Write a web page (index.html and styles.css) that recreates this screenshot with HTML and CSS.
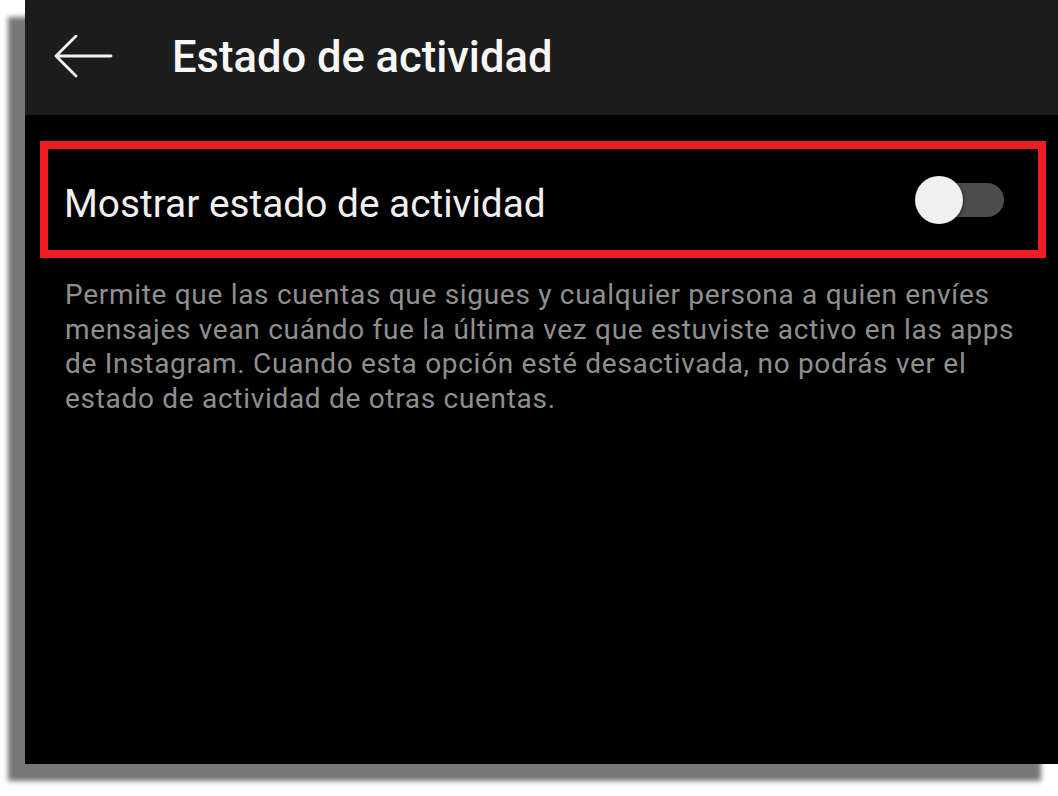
FILE: index.html
```html
<!DOCTYPE html>
<html lang="es">
<head>
<meta charset="utf-8">
<title>Estado de actividad</title>
<link rel="stylesheet" href="styles.css">
</head>
<body>
<div class="screen">
  <header class="topbar">
    <svg class="back" width="60" height="46" viewBox="0 0 60 46" aria-hidden="true">
      <path d="M58 21 H3 M23 1 L3 21 L23 41" fill="none" stroke="#f2f2f2" stroke-width="2.8" stroke-linecap="round" stroke-linejoin="round"/>
    </svg>
    <h1 class="title">Estado de actividad</h1>
  </header>
  <main class="content">
    <div class="setting">
      <span class="label">Mostrar estado de actividad</span>
      <span class="switch"><span class="track"></span><span class="knob"></span></span>
    </div>
    <p class="desc">Permite que las cuentas que sigues y cualquier persona a quien envíes mensajes vean cuándo fue la última vez que estuviste activo en las apps de Instagram. Cuando esta opción esté desactivada, no podrás ver el estado de actividad de otras cuentas.</p>
  </main>
</div>
</body>
</html>
```

FILE: styles.css
```css
html, body {
  margin: 0;
  padding: 0;
  background: #ffffff;
}
body {
  width: 1058px;
  height: 796px;
  overflow: hidden;
  font-family: Roboto, "Liberation Sans", sans-serif;
}
.screen {
  margin-left: 25px;
  width: 1033px;
  height: 764px;
  background: #000000;
  box-shadow: -17px 17px 5px #777777;
  display: flex;
  flex-direction: column;
}
.topbar {
  height: 115px;
  background: #1c1c1c;
  display: flex;
  align-items: center;
  flex-shrink: 0;
}
.back {
  margin-left: 28px;
  display: block;
}
.title {
  margin: 0 0 0 59px;
  font-size: 43.5px;
  font-weight: 500;
  color: #f7f7f7;
}
.content {
  padding: 26px 12px 0 15px;
}
.setting {
  box-sizing: border-box;
  width: 1006px;
  height: 117px;
  border: 8px solid #ee1c25;
  display: flex;
  align-items: center;
  justify-content: space-between;
  padding: 0 34px 0 16px;
}
.label {
  font-size: 38.8px;
  color: #f0f0f0;
  font-weight: 400;
  margin-top: 7px;
}
.switch {
  position: relative;
  width: 89px;
  height: 48px;
  display: block;
}
.track {
  position: absolute;
  left: 3px;
  top: 7px;
  width: 86px;
  height: 34px;
  border-radius: 17px;
  background: #4d4d4d;
}
.knob {
  position: absolute;
  left: 0;
  top: 0;
  width: 48px;
  height: 48px;
  border-radius: 50%;
  background: #f0f0f0;
  box-shadow: 1px 1px 3px rgba(0,0,0,0.5);
}
.desc {
  margin: 20px 0 0 25px;
  width: 968px;
  font-size: 28px;
  letter-spacing: 0.7px;
  line-height: 34.7px;
  color: #8f8f8f;
}
```
